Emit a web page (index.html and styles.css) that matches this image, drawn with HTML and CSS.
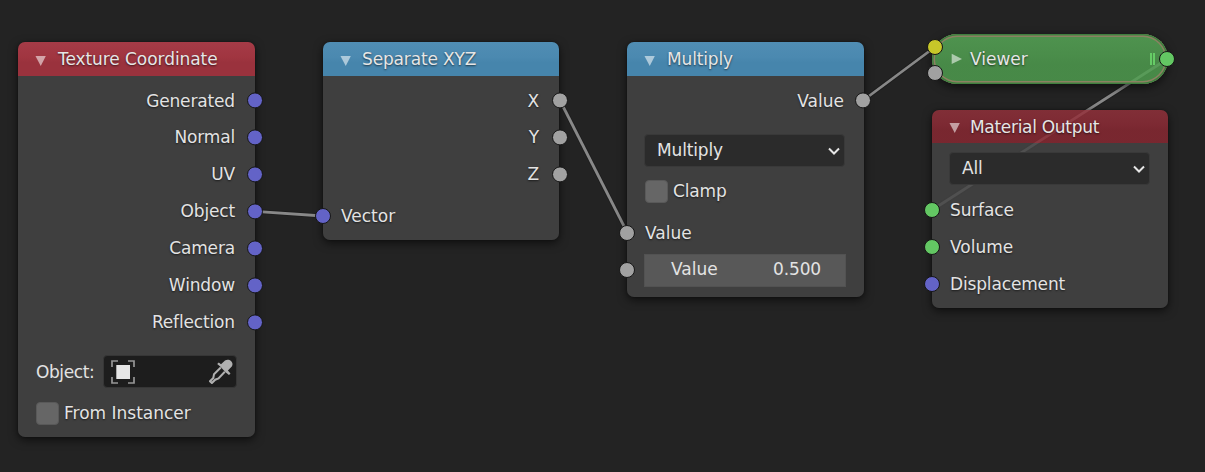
FILE: index.html
```html
<!DOCTYPE html>
<html lang="en">
<head>
<meta charset="utf-8">
<title>Node Editor</title>
<link rel="stylesheet" href="styles.css">
</head>
<body>
<main class="canvas">
  <svg class="links" width="1205" height="472" viewBox="0 0 1205 472">
    <g class="link-edge">
      <path d="M255 211.3L323 216"/><path d="M560 100.500L627.500 233"/><path d="M863 100.500L935 47"/><path d="M1167 59.300L932 210"/>
    </g>
    <g class="link-core">
      <path d="M255 211.3L323 216"/><path d="M560 100.500L627.500 233"/><path d="M863 100.500L935 47"/><path d="M1167 59.300L932 210"/>
    </g>
  </svg>

  <section class="node node-coord">
    <header class="head head-input"><svg class="tri" viewBox="0 0 12 12"><path d="M.5.700H11.300L6 11.300Z"/></svg><span class="title t-coord">Texture Coordinate</span></header>
    <div class="body">
      <div class="row out"><span>Generated</span><i class="pin vec"></i></div>
      <div class="row out"><span>Normal</span><i class="pin vec"></i></div>
      <div class="row out"><span>UV</span><i class="pin vec"></i></div>
      <div class="row out"><span>Object</span><i class="pin vec"></i></div>
      <div class="row out"><span>Camera</span><i class="pin vec"></i></div>
      <div class="row out"><span>Window</span><i class="pin vec"></i></div>
      <div class="row out"><span>Reflection</span><i class="pin vec"></i></div>
      <div class="prop">
        <span class="prop-name">Object:</span>
        <div class="picker">
          <svg width="24" height="24" viewBox="0 0 24 24"><path class="corners" d="M1 7V1H7M17 1H23V7M23 17V23H17M7 23H1V17"/><rect class="solid" x="5.300" y="5" width="13.700" height="14"/></svg>
          <svg class="dropper" width="24" height="25" viewBox="0 0 24 25"><path class="bulb" d="M8.200 5L9.800 3.600L12 5.200L16 1.500C20-1 25.500 3 22.800 7.500L18.900 11.600L21.500 14.500L20 16L16.800 13.400L11.200 7.500Z"/><path class="tube" d="M11.800 8.500L5 15.200L4.300 19L1 22.200L2.900 24L6.200 20.700L9.500 19.500L15.800 12.800"/></svg>
        </div>
      </div>
      <label class="check"><i class="box"></i><span class="wide">From Instancer</span></label>
    </div>
  </section>

  <section class="node node-sep">
    <header class="head head-conv"><svg class="tri" viewBox="0 0 12 12"><path d="M.5.700H11.300L6 11.300Z"/></svg><span class="title">Separate XYZ</span></header>
    <div class="body">
      <div class="row out"><span>X</span><i class="pin val"></i></div>
      <div class="row out"><span>Y</span><i class="pin val"></i></div>
      <div class="row out"><span>Z</span><i class="pin val"></i></div>
      <div class="row in gap-top"><span class="wide">Vector</span><i class="pin vec"></i></div>
    </div>
  </section>

  <section class="node node-mul">
    <header class="head head-conv"><svg class="tri" viewBox="0 0 12 12"><path d="M.5.700H11.300L6 11.300Z"/></svg><span class="title">Multiply</span></header>
    <div class="body">
      <div class="row out"><span class="wide">Value</span><i class="pin val"></i></div>
      <div class="select select-mul"><span>Multiply</span><svg width="12" height="9" viewBox="0 0 12 9"><path d="M1 1.500L6 6.500L11 1.500"/></svg></div>
      <label class="check"><i class="box"></i><span>Clamp</span></label>
      <div class="row in row-value"><span class="wide">Value</span><i class="pin val"></i></div>
      <div class="row in"><div class="number"><span class="wide">Value</span><span>0.500</span></div><i class="pin val"></i></div>
    </div>
  </section>

  <section class="viewer">
    <svg class="tri" viewBox="0 0 12 12"><path d="M.700.500V11.300L11.500 6Z"/></svg><span class="title">Viewer</span><i class="grip"></i>
    <i class="pin color"></i><i class="pin val low"></i><i class="pin shader"></i>
  </section>

  <section class="node node-out">
    <header class="head head-output"><svg class="tri" viewBox="0 0 12 12"><path d="M.5.700H11.300L6 11.300Z"/></svg><span class="title t-out">Material Output</span></header>
    <div class="body">
      <div class="select"><span>All</span><svg width="12" height="9" viewBox="0 0 12 9"><path d="M1 1.500L6 6.500L11 1.500"/></svg></div>
      <div class="row in"><span>Surface</span><i class="pin shader"></i></div>
      <div class="row in"><span class="wide">Volume</span><i class="pin shader"></i></div>
      <div class="row in"><span>Displacement</span><i class="pin vec"></i></div>
    </div>
  </section>
</main>
</body>
</html>
```
FILE: styles.css
```css
* { box-sizing: border-box; }
body { margin: 0; background: #232323; }
.canvas {
  position: relative;
  width: 1205px;
  height: 472px;
  overflow: hidden;
  font: 17px/24px "DejaVu Sans", sans-serif;
  letter-spacing: -0.15px;
  color: #e3e3e3;
}
.links { position: absolute; left: 0; top: 0; fill: none; }
.link-edge { stroke: #1a1a1a; stroke-width: 4.5; stroke-opacity: .7; }
.link-core { stroke: #888; stroke-width: 2.8; }

/* Nodes */
.node {
  position: absolute;
  width: 236px;
  border-radius: 7px;
  box-shadow: 0 3px 10px rgba(0, 0, 0, .6), 0 0 2px rgba(0, 0, 0, .4);
  display: flex;
  flex-direction: column;
}
.node-coord { left: 18px; top: 42px; width: 237px; height: 395px; }
.node-sep { left: 323px; top: 42px; height: 198px; }
.node-mul { left: 627px; top: 42px; width: 237px; height: 255px; }
.node-out { left: 932px; top: 110px; height: 198px; }
.head {
  height: 34px;
  flex: none;
  display: flex;
  align-items: center;
  padding-left: 16.5px;
  border-radius: 7px 7px 0 0;
}
.head-input { background: linear-gradient(#a53b47, #a03540 45%, #9a323d 60%); }
.head-conv { background: linear-gradient(#508db3, #4b89b0 45%, #4685ac 60%); }
.head-output { height: 33px; background: linear-gradient(rgba(148, 49, 59, .83), rgba(143, 43, 54, .83) 45%, rgba(138, 40, 50, .83) 60%); }
.body {
  flex: 1;
  display: flex;
  flex-direction: column;
  padding-top: 5px;
  background: #3f3f3f;
  border-radius: 0 0 7px 7px;
}
.node-out .body { background: rgba(69, 69, 69, .83); padding-top: 9px; }
.tri { width: 11.5px; height: 12px; margin-top: 3px; fill: #fff; fill-opacity: .55; }
.title { margin-left: 11px; color: #e6e6e6; }
.node-coord .title, .node-mul .title { margin-left: 12px; }
.title, .row > span, .check span { text-shadow: 0 1px 2px rgba(0, 0, 0, .6); }
.wide { letter-spacing: 0; }
.canvas .t-coord { letter-spacing: -0.07px; }
.canvas .t-out { letter-spacing: -0.3px; margin-left: 10px; }

/* Rows and sockets */
.row { position: relative; height: 37px; flex: none; display: flex; align-items: center; }
.out { justify-content: flex-end; padding-right: 20px; }
.out:first-child { padding-top: 2px; }
.in { padding-left: 18px; }
.gap-top { margin-top: 5px; }
.pin {
  position: absolute;
  width: 16px;
  height: 16px;
  top: 11px;
  border: 1px solid #161616;
  border-radius: 50%;
}
.row .pin { transform: translateY(.4px); }
.row.in .pin { transform: none; }
.out .pin { right: -8px; }
.in .pin { left: -8px; }
.node-sep .out .pin { right: -9px; }
.node-mul .out .pin { right: -7px; }
.vec { background: #6363c7; }
.val { background: #a1a1a1; }
.color { background: #c7c729; }
.shader { background: #63c763; }

/* Controls */
.prop { display: flex; align-items: center; gap: 9px; height: 34px; margin-top: 14.5px; padding-left: 18px; }
.prop-name { width: 58px; flex: none; letter-spacing: -0.4px; }
.picker {
  width: 134px;
  height: 33px;
  display: flex;
  align-items: center;
  justify-content: space-between;
  padding: 0 3px 0 7px;
  background: #1d1d1d;
  border: 1px solid #363636;
  border-radius: 4px;
}
.corners { fill: none; stroke: #969696; stroke-width: 1.7; }
.solid { fill: #e6e6e6; }
.bulb { fill: #b0b0b0; }
.tube { fill: none; stroke: #b0b0b0; stroke-width: 2; }
.check { display: flex; align-items: center; gap: 5.5px; height: 24px; margin: 12.5px 0 0 17.5px; }
.box { width: 23px; height: 23px; background: #666; border: 1px solid #595959; border-radius: 4px; }
.node-mul .check { margin-top: 12px; }
.select {
  width: 201px;
  height: 33px;
  flex: none;
  margin-left: 17px;
  display: flex;
  align-items: center;
  justify-content: space-between;
  padding: 0 4px 0 12px;
  background: #2b2b2b;
  border: 1px solid #393939;
  border-radius: 4px;
}
.select span { margin-top: -2px; }
.select svg { margin-top: 2px; fill: none; stroke: #e6e6e6; stroke-width: 2; }
.select-mul { margin: 16px 0 0 17px; }
.node-out .select { margin-bottom: 6px; }
.row-value { margin-top: 11px; }
.number {
  width: 202px;
  height: 33px;
  margin: 1px 0 0 -1px;
  display: flex;
  align-items: center;
  justify-content: space-between;
  padding: 0 24px 2px 26px;
  background: #585858;
  border: 1px solid #525252;
}

/* Collapsed node */
.viewer {
  position: absolute;
  left: 932px;
  top: 34px;
  width: 236px;
  height: 50px;
  display: flex;
  align-items: center;
  padding: 0 13px 0 19px;
  border-radius: 25px;
  background: linear-gradient(rgba(88, 170, 88, .83), rgba(82, 162, 82, .83) 45%, rgba(79, 158, 79, .83) 60%);
  box-shadow: inset 0 0 0 1.5px #3f803f, inset 0 0 0 3px #8c8062, 0 3px 10px rgba(0, 0, 0, .6);
}
.viewer .tri { margin-top: 0; }
.viewer .title { margin-left: 7.5px; letter-spacing: 0; }
.grip { width: 5px; height: 12px; margin-left: auto; border: solid #66cc66; border-width: 0 2px; }
.viewer .pin { top: 5px; left: -5px; }
.viewer .low { top: 31px; }
.viewer .pin.shader { top: 17px; left: 227px; }
```
